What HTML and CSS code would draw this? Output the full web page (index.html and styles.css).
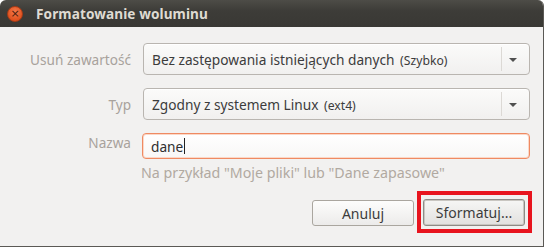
FILE: index.html
```html
<!DOCTYPE html>
<html lang="pl">
<head>
<meta charset="utf-8">
<title>Formatowanie woluminu</title>
<link rel="stylesheet" href="styles.css">
</head>
<body>
<div class="window">
  <div class="titlebar">
    <div class="close"><span>×</span></div>
    <div class="title">Formatowanie woluminu</div>
  </div>
  <div class="form">
    <div class="label">Usuń zawartość</div>
    <div class="combo">
      <div class="combo-text">Bez zastępowania istniejących danych <small>(Szybko)</small></div>
      <div class="combo-sep"></div>
      <div class="combo-arrow"></div>
    </div>
    <div class="label">Typ</div>
    <div class="combo">
      <div class="combo-text">Zgodny z systemem Linux <small>(ext4)</small></div>
      <div class="combo-sep"></div>
      <div class="combo-arrow"></div>
    </div>
    <div class="label label-top">Nazwa</div>
    <div class="entry"><span>dane</span><span class="cursor"></span></div>
    <div></div>
    <div class="hint">Na przykład "Moje pliki" lub "Dane zapasowe"</div>
  </div>
  <div class="buttons">
    <button class="btn">Anuluj</button>
    <div class="highlight-wrap">
      <button class="btn btn-default">Sformatuj...</button>
      <div class="highlight"></div>
    </div>
  </div>
</div>
</body>
</html>
```
FILE: styles.css
```css
html, body {
  margin: 0;
  padding: 0;
  background: #ffffff;
}
body {
  font-family: "Noto Sans", "DejaVu Sans", sans-serif;
  font-size: 14px;
  color: #3c3c3c;
}
.window {
  width: 544px;
  height: 247px;
  box-sizing: border-box;
  background: #f2f1f0;
  border-right: 1px solid #5b5955;
  border-bottom: 1px solid #5b5955;
  border-radius: 6px 6px 0 0;
  display: flex;
  flex-direction: column;
  overflow: hidden;
}
.titlebar {
  height: 27px;
  flex: none;
  background: linear-gradient(#4d4c47, #3d3c38 40%, #393834);
  display: flex;
  align-items: center;
  padding-left: 7px;
}
.close {
  width: 16px;
  height: 16px;
  box-sizing: border-box;
  border-radius: 50%;
  background: radial-gradient(circle at 50% 35%, #f4794b, #e0521f 70%, #c9431a);
  border: 1px solid #a83c17;
  display: flex;
  align-items: center;
  justify-content: center;
  margin-top: 1px;
}
.close span {
  font-family: "DejaVu Sans", sans-serif;
  font-size: 11px;
  line-height: 1;
  color: #4a1d0c;
  margin-top: -1px;
}
.title {
  margin-left: 13px;
  font-weight: bold;
  font-size: 13.6px;
  color: #dfdbd2;
  letter-spacing: 0.1px;
}
.form {
  display: grid;
  grid-template-columns: 131px 1fr;
  column-gap: 12px;
  padding: 16px 13px 0 0;
  row-gap: 13px;
}
.label {
  text-align: right;
  align-self: center;
  color: #a8a29c;
  font-size: 13.6px;
}
.label-top {
  align-self: start;
  padding-top: 0px;
}
.combo {
  height: 32px;
  box-sizing: border-box;
  border: 1px solid #b9b5b0;
  border-radius: 4px;
  background: linear-gradient(#fbfbfa, #f1f0ef);
  display: flex;
  align-items: center;
  box-shadow: inset 0 1px 0 #ffffff;
}
.combo-text {
  flex: 1;
  padding-left: 8px;
  font-size: 13.7px;
  color: #3c3c3c;
  white-space: nowrap;
}
.combo-text small {
  font-size: 12.2px;
  margin-left: 2px;
}
.combo-sep {
  width: 1px;
  height: 24px;
  background: #dcd9d5;
}
.combo-arrow {
  width: 0;
  height: 0;
  border-left: 4px solid transparent;
  border-right: 4px solid transparent;
  border-top: 4px solid #505050;
  margin: 2px 12px 0 7px;
}
.entry {
  height: 26px;
  margin-left: -1px;
  box-sizing: border-box;
  border: 1px solid #ef8a62;
  border-radius: 4px;
  box-shadow: inset 0 0 0 1px #fbd8c8;
  background: linear-gradient(#ffffff, #f8f7f6);
  display: flex;
  align-items: center;
  padding-left: 8px;
  font-size: 13.7px;
  color: #2f2f2f;
}
.cursor {
  width: 1px;
  height: 16px;
  background: #222;
  margin-left: 1px;
}
.hint {
  margin-top: -8px;
  margin-left: -2px;
  color: #b1a9a1;
  font-size: 14.25px;
  line-height: 18px;
}
.buttons {
  display: flex;
  justify-content: flex-end;
  gap: 9px;
  padding: 17px 18px 0 0;
}
.btn {
  width: 102px;
  height: 26px;
  box-sizing: border-box;
  border: 1px solid #aaa69f;
  border-radius: 3px;
  background: linear-gradient(#fdfdfc, #ecebea);
  font-family: "Noto Sans", "DejaVu Sans", sans-serif;
  font-size: 14px;
  color: #3c3c3c;
  padding: 0;
  margin-top: 1px;
}
.btn-default {
  height: 27px;
  margin-top: 0;
  border: 1px solid #8e8b86;
  box-shadow: inset 0 0 0 1px #c9c6c1;
  background: linear-gradient(#f6f6f5, #e2e1df);
}
.highlight-wrap {
  position: relative;
}
.highlight {
  position: absolute;
  left: -6px;
  right: -7px;
  top: -8px;
  bottom: -7px;
  border: 4px solid #e8141e;
}
```
